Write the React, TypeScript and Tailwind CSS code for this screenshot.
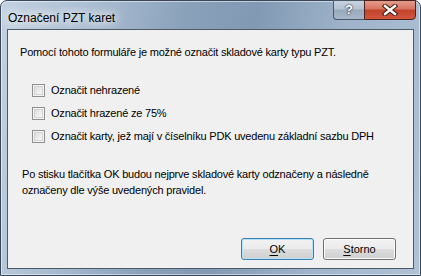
import React from 'react';

const font = { fontFamily: '"Liberation Sans", Arial, sans-serif' };

function Check({ label }: { label: string }) {
  return (
    <label className="flex items-center h-[23px] gap-[6px]">
      <span className="w-[13px] h-[13px] border border-[#8e8f8f] bg-[#f4f4f4] p-[1px]">
        <span className="block w-full h-full border border-[#d3d3d3] bg-gradient-to-br from-[#dcdcdc] to-[#f9f9f9]" />
      </span>
      <span>{label}</span>
    </label>
  );
}

function WinButton({ hot, label }: { hot: string; label: string }) {
  return (
    <button
      className={
        'w-[73px] h-[22px] rounded-[3px] border text-[11px] text-black ' +
        'bg-[linear-gradient(#f2f2f2_0%,#ebebeb_50%,#dddddd_51%,#cfcfcf_100%)] ' +
        (hot === 'O' ? 'border-[#3c7fb1] shadow-[inset_0_0_0_1px_#b6e2f7]' : 'border-[#707070] shadow-[inset_0_0_0_1px_#fcfcfc]')
      }
    >
      <span className="underline underline-offset-2">{hot}</span>
      {label}
    </button>
  );
}

export default function App() {
  return (
    <div
      className="w-[421px] h-[276px] overflow-hidden bg-white"
      style={font}
    >
      <div className="w-full h-full flex flex-col rounded-t-[7px] border border-[#39475a] bg-[linear-gradient(100deg,#c3d2e1_0%,#a7bbd0_22%,#8aa1ba_40%,#8199b3_55%,#9fb4ca_75%,#afc2d6_100%)] px-[6px] pb-[6px] shadow-[inset_0_0_0_1px_rgba(255,255,255,0.5)]">
        <div className="h-[28px] flex items-start justify-between">
          <span className="mt-[8px] ml-[1px] text-[12px] text-black [text-shadow:0_0_8px_#fff,0_0_12px_#fff,0_0_16px_rgba(255,255,255,0.8)]">
            Označení PZT karet
          </span>
          <div className="flex -mt-[1px] -mr-[2px]">
            <div className="w-[31px] h-[20px] rounded-bl-[4px] border border-[#4a5868] border-r-0 bg-[linear-gradient(#c7d3df_0%,#b3c2d1_45%,#98a9bb_50%,#a6b8ca_100%)] flex items-center justify-center text-white font-bold text-[13px] [text-shadow:0_0_1px_#222,0_0_2px_#222]">
              ?
            </div>
            <div className="w-[52px] h-[20px] rounded-br-[4px] border border-[#4a2320] bg-[linear-gradient(#e49c8c_0%,#d6735f_45%,#c2422c_50%,#d2563d_100%)] flex items-center justify-center">
              <svg width="16" height="12" viewBox="0 0 16 12">
                <path d="M3 2 L13 10 M13 2 L3 10" stroke="#3b1a14" strokeWidth="4.4" strokeLinecap="square" />
                <path d="M3 2 L13 10 M13 2 L3 10" stroke="#ffffff" strokeWidth="2.4" strokeLinecap="square" />
              </svg>
            </div>
          </div>
        </div>
        <div className="flex-1 border border-[#4d5a68] bg-[#f0f0f0] text-[11px] tracking-[-0.2px] text-black flex flex-col px-[12px] pt-[16px] pb-[8px]">
          <p className="leading-[13px]">Pomocí tohoto formuláře je možné označit skladové karty typu PZT.</p>
          <div className="mt-[20px] ml-[12px] flex flex-col">
            <Check label="Označit nehrazené" />
            <Check label="Označit hrazené ze 75%" />
            <Check label="Označit karty, jež mají v číselníku PDK uvedenu základní sazbu DPH" />
          </div>
          <p className="mt-[18px] ml-[2px] leading-[16px]">
            Po stisku tlačítka OK budou nejprve skladové karty odznačeny a následně
            <br />
            označeny dle výše uvedených pravidel.
          </p>
          <div className="mt-auto flex justify-end gap-[9px] mr-[5px] tracking-normal">
            <WinButton hot="O" label="K" />
            <WinButton hot="S" label="torno" />
          </div>
        </div>
      </div>
    </div>
  );
}
